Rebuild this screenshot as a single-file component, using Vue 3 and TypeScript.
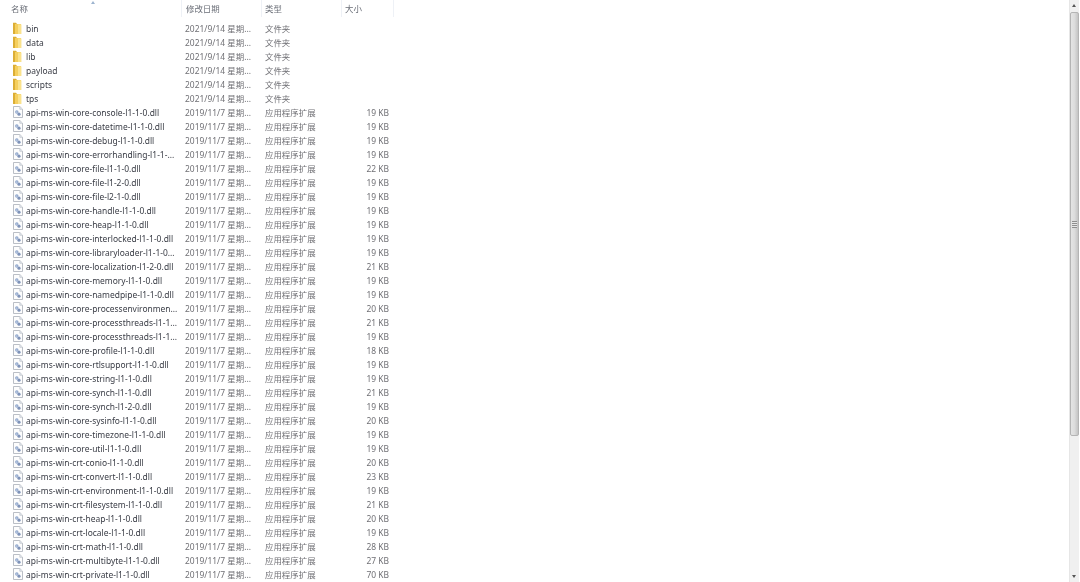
<script setup lang="ts">
type Row = {
  name: string;
  date: string;
  type: string;
  size: string;
  folder: boolean;
}

const folders = ["bin", "data", "lib", "payload", "scripts", "tps"]

const files: [string, number][] = [
  ["core-console-l1-1-0.dll", 19],
  ["core-datetime-l1-1-0.dll", 19],
  ["core-debug-l1-1-0.dll", 19],
  ["core-errorhandling-l1-1-...", 19],
  ["core-file-l1-1-0.dll", 22],
  ["core-file-l1-2-0.dll", 19],
  ["core-file-l2-1-0.dll", 19],
  ["core-handle-l1-1-0.dll", 19],
  ["core-heap-l1-1-0.dll", 19],
  ["core-interlocked-l1-1-0.dll", 19],
  ["core-libraryloader-l1-1-0...", 19],
  ["core-localization-l1-2-0.dll", 21],
  ["core-memory-l1-1-0.dll", 19],
  ["core-namedpipe-l1-1-0.dll", 19],
  ["core-processenvironmen...", 20],
  ["core-processthreads-l1-1...", 21],
  ["core-processthreads-l1-1...", 19],
  ["core-profile-l1-1-0.dll", 18],
  ["core-rtlsupport-l1-1-0.dll", 19],
  ["core-string-l1-1-0.dll", 19],
  ["core-synch-l1-1-0.dll", 21],
  ["core-synch-l1-2-0.dll", 19],
  ["core-sysinfo-l1-1-0.dll", 20],
  ["core-timezone-l1-1-0.dll", 19],
  ["core-util-l1-1-0.dll", 19],
  ["crt-conio-l1-1-0.dll", 20],
  ["crt-convert-l1-1-0.dll", 23],
  ["crt-environment-l1-1-0.dll", 19],
  ["crt-filesystem-l1-1-0.dll", 21],
  ["crt-heap-l1-1-0.dll", 20],
  ["crt-locale-l1-1-0.dll", 19],
  ["crt-math-l1-1-0.dll", 28],
  ["crt-multibyte-l1-1-0.dll", 27],
  ["crt-private-l1-1-0.dll", 70],
]

const rows: Row[] = [
  ...folders.map((name) => ({
    name,
    date: "2021/9/14 星期...",
    type: "文件夹",
    size: "",
    folder: true,
  })),
  ...files.map(([name, size]) => ({
    name: `api-ms-win-${name}`,
    date: "2019/11/7 星期...",
    type: "应用程序扩展",
    size: `${size} KB`,
    folder: false,
  })),
]
</script>

<template>
  <div class="window">
    <div class="list">
      <div class="head">
        <div class="col col-name">名称<span class="sort"></span></div>
        <div class="col col-date">修改日期</div>
        <div class="col col-type">类型</div>
        <div class="col col-size">大小</div>
      </div>
      <div class="rows">
        <div v-for="(row, i) in rows" :key="i" class="row">
          <svg v-if="row.folder" class="icon" viewBox="0 0 12 12">
            <path d="M1 .8h3l1 1.2h3.8v10H1z" fill="#dcae35" />
            <path d="M3 2h5.6l.6.8V12H3z" fill="#f5cf5e" />
            <path d="M6 2.4h3.2V12H6z" fill="#fae28c" />
          </svg>
          <svg v-else class="icon" viewBox="0 0 12 12">
            <path d="M1.5.5h6.3l2.7 2.7v8.3h-9z" fill="#fdfdfd" stroke="#a9afb8" stroke-width=".8" />
            <path d="M7.8.7v2.6h2.5" fill="#e3e8ee" stroke="#b5bac2" stroke-width=".6" />
            <circle cx="4.8" cy="6" r="1.7" fill="#8fa6cc" />
            <circle cx="7" cy="8.2" r="1.6" fill="#7e92b8" />
            <circle cx="4.8" cy="6" r=".6" fill="#eef2f8" />
          </svg>
          <span class="name">{{ row.name }}</span>
          <span class="date">{{ row.date }}</span>
          <span class="type">{{ row.type }}</span>
          <span class="size">{{ row.size }}</span>
        </div>
      </div>
    </div>
    <div class="scrollbar">
      <div class="arrow arrow-up"></div>
      <div class="thumb"><div class="grip"></div></div>
      <div class="track"></div>
      <div class="arrow arrow-down"></div>
    </div>
  </div>
</template>

<style>
html,
body {
  margin: 0;
  background: #fff;
  overflow: hidden;
}
</style>

<style scoped>
.window {
  width: 1080px;
  height: 582px;
  display: flex;
  overflow: hidden;
  background: #fff;
  font-family: "Noto Sans", "Noto Sans CJK SC", sans-serif;
  font-size: 8.45px;
  color: #46464b;
}
.list {
  flex: 1;
  min-width: 0;
  filter: blur(0.4px);
}
.head {
  display: flex;
  height: 17px;
  color: #6b6f78;
}
.col {
  position: relative;
  box-sizing: border-box;
  padding: 3px 0 0 4px;
  border-right: 1px solid #eef1f6;
  line-height: 12px;
}
.col-name {
  width: 182px;
  padding-left: 11px;
}
.col-date {
  width: 80px;
  padding-left: 4px;
}
.col-type {
  width: 80px;
  padding-left: 3px;
}
.col-size {
  width: 52px;
  padding-left: 3px;
}
.sort {
  position: absolute;
  left: 91px;
  top: 1px;
  width: 0;
  height: 0;
  border-left: 2.5px solid transparent;
  border-right: 2.5px solid transparent;
  border-bottom: 3px solid #9db4cf;
}
.rows {
  padding-top: 4px;
}
.row {
  display: flex;
  align-items: center;
  height: 14px;
  white-space: nowrap;
}
.icon {
  width: 12px;
  height: 12px;
  margin-left: 12px;
  flex: none;
}
.name {
  width: 159px;
  margin-left: 2px;
  flex: none;
  color: #383b44;
}
.date {
  width: 80px;
  flex: none;
  color: #707075;
  margin-top: -1px;
}
.type {
  width: 76px;
  flex: none;
  color: #707075;
  margin-top: -1px;
}
.size {
  width: 48px;
  flex: none;
  text-align: right;
  color: #707075;
}
.scrollbar {
  width: 10px;
  margin-right: 1px;
  display: flex;
  flex-direction: column;
  background: #f0f0f0;
  border-left: 1px solid #e6e6e6;
  box-sizing: border-box;
}
.arrow {
  height: 12px;
  flex: none;
  position: relative;
}
.arrow::after {
  content: "";
  position: absolute;
  left: 2px;
  width: 0;
  height: 0;
  border-left: 2.5px solid transparent;
  border-right: 2.5px solid transparent;
}
.arrow-up::after {
  top: 4px;
  border-bottom: 3px solid #555;
}
.arrow-down::after {
  top: 5px;
  border-top: 3px solid #555;
}
.thumb {
  height: 424px;
  flex: none;
  box-sizing: border-box;
  border: 1px solid #b4b4b4;
  border-radius: 2px;
  background: linear-gradient(90deg, #e4e4e4, #dcdcdc 50%, #c4c4c4);
  display: flex;
  align-items: center;
  justify-content: center;
}
.grip {
  width: 5px;
  height: 7px;
  background: repeating-linear-gradient(180deg, #8f8f8f 0, #8f8f8f 1px, #e6e6e6 1px, #e6e6e6 2px);
}
.track {
  flex: 1;
}
</style>
